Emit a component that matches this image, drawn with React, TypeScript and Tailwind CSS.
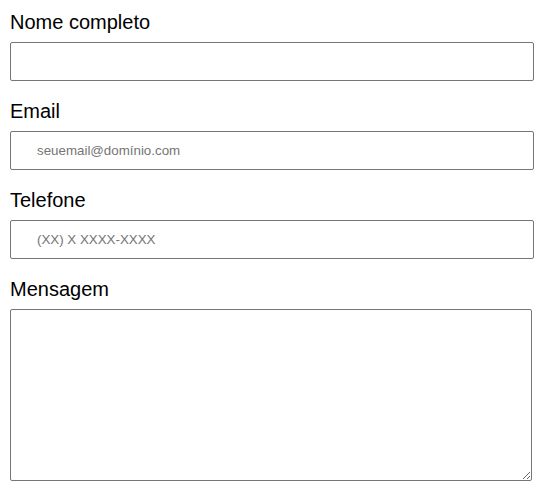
import React from 'react';

const fieldClass =
  "block w-[524px] h-[39px] border border-[#767676] rounded-[2px] bg-white pl-[26px] pr-2 text-[13.333px] text-black placeholder:text-[#757575] outline-none";

const Field = ({ label, placeholder = '', type = 'text' }) => {
  return (
    <div className="flex flex-col">
      <label className="block text-[20px] leading-[23px] text-black mb-2">{label}</label>
      <input type={type} placeholder={placeholder} className={fieldClass} />
    </div>
  );
};

export default function App() {
  return (
    <div className="min-h-screen bg-white pt-[11px] px-[10px] font-['Liberation_Sans',Arial,sans-serif]">
      <form className="flex flex-col gap-[19px]">
        <Field label="Nome completo" />
        <Field label="Email" type="email" placeholder="seuemail@domínio.com" />
        <Field label="Telefone" type="tel" placeholder="(XX) X XXXX-XXXX" />
        <div className="flex flex-col">
          <label className="block text-[20px] leading-[23px] text-black mb-2">Mensagem</label>
          <textarea className="block w-[522px] h-[172px] border border-[#767676] rounded-[2px] bg-white p-1 text-[13.333px] outline-none resize" />
        </div>
      </form>
    </div>
  );
}
